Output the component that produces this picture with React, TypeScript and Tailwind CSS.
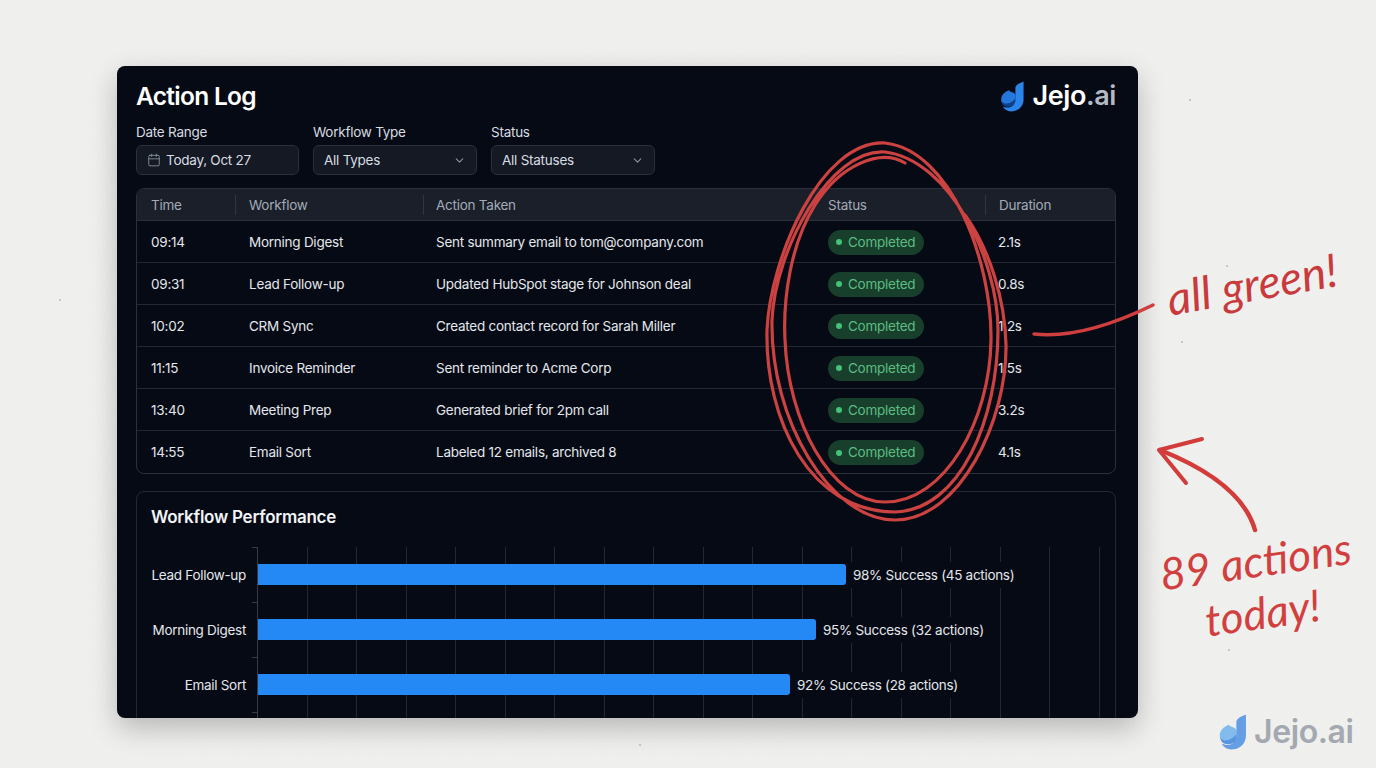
import { Calendar, ChevronDown } from "lucide-react";

const rows = [
  { time: "09:14", workflow: "Morning Digest", action: "Sent summary email to tom@company.com", duration: "2.1s" },
  { time: "09:31", workflow: "Lead Follow-up", action: "Updated HubSpot stage for Johnson deal", duration: "0.8s" },
  { time: "10:02", workflow: "CRM Sync", action: "Created contact record for Sarah Miller", duration: "1.2s" },
  { time: "11:15", workflow: "Invoice Reminder", action: "Sent reminder to Acme Corp", duration: "1.5s" },
  { time: "13:40", workflow: "Meeting Prep", action: "Generated brief for 2pm call", duration: "3.2s" },
  { time: "14:55", workflow: "Email Sort", action: "Labeled 12 emails, archived 8", duration: "4.1s" },
];

const bars = [
  { name: "Lead Follow-up", width: 588, label: "98% Success (45 actions)" },
  { name: "Morning Digest", width: 558, label: "95% Success (32 actions)" },
  { name: "Email Sort", width: 532, label: "92% Success (28 actions)" },
];

const gridLines = Array.from({ length: 18 }, (_, i) => i);

function LogoMark({ light }: { light?: boolean }) {
  return (
    <svg viewBox="0 0 26 32" className="h-full w-full">
      <path d="M9.5 9.5 C10 12 16 11 16 15 L16 21 C16 26 9 28 3 24 C-1 19 2 12 9.5 9.5Z" fill={light ? "#6fb2ec" : "#2478dc"} />
      <path d="M1.5 21 C5 25 11 24 16 18 L16 23 C13 28 5 28 2.5 24Z" fill={light ? "#3f86dc" : "#0f3f86"} />
      <path d="M24.5 0.5 L24.5 19 C24.5 27 18 31.5 11.5 31.5 C7.5 31.5 4.5 29.5 3 26.5 C9 29 15.5 27 16 20 L16 7 C16.5 3.5 21 2 24.5 0.5Z" fill={light ? "#4d90e4" : "#2b84ea"} />
    </svg>
  );
}

function Select({ label, value, width }: { label: string; value: string; width: string }) {
  return (
    <div className={`flex flex-col ${width}`}>
      <span className="mb-[3px] text-[13.5px] leading-[20px] tracking-[-0.25px] text-[#d7dbe2]">{label}</span>
      <div className="flex h-[30px] items-center justify-between rounded-md border border-[#2a303c] bg-[#141923] pr-[10px] pl-[10px]">
        <span className="text-[13.5px] tracking-[-0.25px] text-[#d9dde3]">{value}</span>
        <ChevronDown size={13} className="text-[#8b93a1]" />
      </div>
    </div>
  );
}

export default function App() {
  return (
    <div className="relative h-[768px] w-[1376px] overflow-hidden bg-[#f1f1ef] pt-[66px] pl-[117px] font-['Inter',sans-serif]">
      {/* paper grain behind the panel */}
      <svg className="absolute top-0 left-0 opacity-[0.06]" width="1376" height="768">
        <filter id="grain">
          <feTurbulence type="fractalNoise" baseFrequency="0.7" numOctaves="2" />
          <feColorMatrix type="saturate" values="0" />
        </filter>
        <rect width="1376" height="768" filter="url(#grain)" />
      </svg>

      <div className="relative h-[652px] w-[1021px] overflow-hidden rounded-lg bg-[#060a14] px-[19px] shadow-[0_10px_28px_rgba(0,0,0,0.24)]">
        <div className="flex h-[48px] items-end justify-between pr-[3px]">
          <h1 className="text-[24.5px] leading-[36px] font-semibold tracking-[-0.7px] text-white">Action Log</h1>
          <div className="flex h-[36px] items-center gap-[7px]">
            <div className="h-[31px] w-[25px]">
              <LogoMark />
            </div>
            <span className="text-[27px] leading-[36px] font-semibold tracking-[-0.4px] text-white">
              Jejo<span className="text-[#b3bac6]">.ai</span>
            </span>
          </div>
        </div>

        <div className="mt-[8px] flex gap-[14px]">
          <div className="flex w-[163px] flex-col">
            <span className="mb-[3px] text-[13.5px] leading-[20px] tracking-[-0.25px] text-[#d7dbe2]">Date Range</span>
            <div className="flex h-[30px] items-center gap-[5px] rounded-md border border-[#2a303c] bg-[#141923] pl-[10px]">
              <Calendar size={14} className="text-[#8b93a1]" strokeWidth={1.5} />
              <span className="text-[13.5px] tracking-[-0.25px] text-[#d9dde3]">Today, Oct 27</span>
            </div>
          </div>
          <Select label="Workflow Type" value="All Types" width="w-[164px]" />
          <Select label="Status" value="All Statuses" width="w-[164px]" />
        </div>

        <div className="mt-[13px] w-[980px] overflow-hidden rounded-lg border border-[#2a303c] text-[13.5px] tracking-[-0.25px]">
          <div className="grid h-[32px] grid-cols-[98px_188px_392px_170px_1fr] items-center border-b border-[#2a303c] bg-[#1a1f2a] pt-px text-[#a3abb7]">
            <div className="pl-[14px]">Time</div>
            <div className="border-l border-[#30363f] pl-[13px]">Workflow</div>
            <div className="border-l border-[#30363f] pl-[12px]">Action Taken</div>
            <div className="pl-[13px]">Status</div>
            <div className="border-l border-[#30363f] pl-[13px]">Duration</div>
          </div>
          {rows.map((row, i) => (
            <div
              key={row.time}
              className={`grid h-[42px] grid-cols-[98px_188px_392px_170px_1fr] items-center pt-px text-[#e4e7ec] ${
                i < rows.length - 1 ? "border-b border-[#232833]" : ""
              }`}
            >
              <div className="pl-[14px]">{row.time}</div>
              <div className="pl-[14px]">{row.workflow}</div>
              <div className="pl-[13px]">{row.action}</div>
              <div className="pl-[13px]">
                <span className="flex h-[25px] w-[96px] items-center gap-[6px] rounded-full bg-[#183f2b] pl-[8px] text-[#5cbc84]">
                  <span className="h-[6px] w-[6px] rounded-full bg-[#45c278]" />
                  Completed
                </span>
              </div>
              <div className="pl-[13px]">{row.duration}</div>
            </div>
          ))}
        </div>

        <div className="mt-[17px] h-[260px] w-[980px] rounded-lg border border-[#232833] px-[14px] pt-[11px]">
          <h2 className="text-[17px] leading-[28px] font-semibold tracking-[-0.25px] text-[#f2f4f7]">Workflow Performance</h2>
          <div className="relative mt-[16px]">
            <div className="absolute top-0 left-[106px] flex h-[180px] w-[843px] justify-between">
              {gridLines.map((n) => (
                <div key={n} className={`h-full w-px ${n === 0 ? "bg-[#343a46]" : "bg-[#222732]"}`} />
              ))}
            </div>
            <div className="absolute top-0 left-[101px] flex h-[166px] flex-col justify-between">
              {[0, 1, 2, 3].map((n) => (
                <div key={n} className="h-px w-[5px] bg-[#343a46]" />
              ))}
            </div>
            {bars.map((bar) => (
              <div key={bar.name} className="relative flex h-[55px] items-center text-[13.5px] tracking-[-0.3px] text-[#e4e7ec]">
                <div className="w-[95px] pt-px text-right whitespace-nowrap">{bar.name}</div>
                <div className="ml-[12px] h-[21px] rounded-r-[3px] bg-[#2589f5]" style={{ width: bar.width }} />
                <div className="ml-[3px] bg-[#060a14] px-[4px] py-[3px] leading-[20px]">{bar.label}</div>
              </div>
            ))}
          </div>
        </div>
      </div>

      {/* red pen notes over the screenshot */}
      <svg className="pointer-events-none absolute top-0 left-0" width="1376" height="768" viewBox="0 0 1376 768" fill="none">
        <path
          d="M905 163 C880 148 840 165 815 205 C790 245 783 300 785 340 C788 420 830 502 885 502 C945 502 990 420 991 340 C992 260 950 150 885 143 C820 140 770 260 767 330 C765 420 810 512 895 512 C960 510 998 420 998 330 C998 260 950 160 885 152 C830 148 775 250 772 320 C770 420 830 520 895 520 C960 520 1007 420 1006 345 C1005 300 990 250 965 215"
          stroke="#cc4240"
          strokeWidth="3.2"
          strokeLinecap="round"
        />
        <path d="M1034 334 C1070 338 1110 326 1153 305" stroke="#cf3f3f" strokeWidth="3.5" strokeLinecap="round" />
        <path d="M1255 530 C1245 495 1210 470 1160 450" stroke="#d23c3a" strokeWidth="4.5" strokeLinecap="round" />
        <path d="M1202 439 L1159 450 L1186 483" stroke="#d23c3a" strokeWidth="4" strokeLinecap="round" strokeLinejoin="round" />
        <g fill="#b9b9b4">
          <circle cx="1227" cy="266" r="1" />
          <circle cx="1182" cy="342" r="1" />
          <circle cx="1229" cy="650" r="1" />
          <circle cx="60" cy="300" r="1" />
          <circle cx="640" cy="745" r="1" />
          <circle cx="1190" cy="100" r="1" />
        </g>
      </svg>

      <div className="absolute top-[256px] left-[1166px] -rotate-[10deg] font-['Lato',sans-serif] text-[46px] leading-[56px] text-[#c93a3c] italic">
        all green!
      </div>
      <div className="absolute top-[534px] left-[1164px] flex w-[190px] -rotate-[8deg] flex-col items-center font-['Lato',sans-serif] text-[44px] leading-[52px] text-[#d23f3f] italic">
        <span className="whitespace-nowrap">89 actions</span>
        <span className="whitespace-nowrap">today!</span>
      </div>

      <div className="absolute top-[714px] left-[1218px] flex h-[36px] items-center gap-[6px]">
        <div className="h-[36px] w-[30px] opacity-85">
          <LogoMark light />
        </div>
        <span className="text-[32px] font-semibold tracking-[-0.4px] text-[#a4a8b0]">Jejo.ai</span>
      </div>
    </div>
  );
}
